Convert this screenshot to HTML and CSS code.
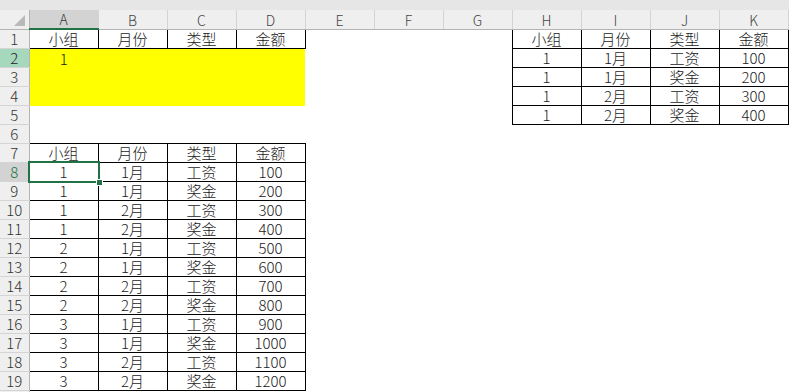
FILE: index.html
```html
<!DOCTYPE html>
<html lang="zh-CN">
<head>
  <meta charset="UTF-8">
  <title>Sheet1</title>
  <link rel="stylesheet" href="styles.css">
</head>
<body>
  <div class="topbar"></div>

  <table class="sheet">
    <colgroup>
      <col class="col-rh">
      <col class="col-c"><col class="col-c"><col class="col-c"><col class="col-c">
      <col class="col-c"><col class="col-c"><col class="col-c">
      <col class="col-c"><col class="col-c"><col class="col-c"><col class="col-c">
    </colgroup>
    <thead>
      <tr class="colhead">
        <th class="corner"><span class="tri"></span></th>
        <th class="sel">A</th><th>B</th><th>C</th><th>D</th>
        <th>E</th><th>F</th><th>G</th>
        <th>H</th><th>I</th><th>J</th><th>K</th>
      </tr>
    </thead>
    <tbody>
      <tr>
        <th class="rh">1</th>
        <td class="b">小组</td><td class="b">月份</td><td class="b">类型</td><td class="b">金额</td>
        <td></td><td></td><td></td>
        <td class="b">小组</td><td class="b">月份</td><td class="b">类型</td><td class="b">金额</td>
      </tr>
      <tr>
        <th class="rh rh-green">2</th>
        <td class="y">1</td><td class="y"></td><td class="y"></td><td class="y"></td>
        <td></td><td></td><td></td>
        <td class="b">1</td><td class="b">1月</td><td class="b">工资</td><td class="b">100</td>
      </tr>
      <tr>
        <th class="rh">3</th>
        <td class="y"></td><td class="y"></td><td class="y"></td><td class="y"></td>
        <td></td><td></td><td></td>
        <td class="b">1</td><td class="b">1月</td><td class="b">奖金</td><td class="b">200</td>
      </tr>
      <tr>
        <th class="rh">4</th>
        <td class="y"></td><td class="y"></td><td class="y"></td><td class="y"></td>
        <td></td><td></td><td></td>
        <td class="b">1</td><td class="b">2月</td><td class="b">工资</td><td class="b">300</td>
      </tr>
      <tr>
        <th class="rh">5</th>
        <td></td><td></td><td></td><td></td>
        <td></td><td></td><td></td>
        <td class="b">1</td><td class="b">2月</td><td class="b">奖金</td><td class="b">400</td>
      </tr>
      <tr>
        <th class="rh">6</th>
        <td></td><td></td><td></td><td></td><td></td><td></td><td></td><td></td><td></td><td></td><td></td>
      </tr>
      <tr>
        <th class="rh">7</th>
        <td class="b">小组</td><td class="b">月份</td><td class="b">类型</td><td class="b">金额</td>
        <td></td><td></td><td></td><td></td><td></td><td></td><td></td>
      </tr>
      <tr>
        <th class="rh rh-active">8</th>
        <td class="b active">1<span class="cursor"></span><span class="handle"></span></td><td class="b">1月</td><td class="b">工资</td><td class="b">100</td>
        <td></td><td></td><td></td><td></td><td></td><td></td><td></td>
      </tr>
      <tr>
        <th class="rh">9</th>
        <td class="b">1</td><td class="b">1月</td><td class="b">奖金</td><td class="b">200</td>
        <td></td><td></td><td></td><td></td><td></td><td></td><td></td>
      </tr>
      <tr>
        <th class="rh">10</th>
        <td class="b">1</td><td class="b">2月</td><td class="b">工资</td><td class="b">300</td>
        <td></td><td></td><td></td><td></td><td></td><td></td><td></td>
      </tr>
      <tr>
        <th class="rh">11</th>
        <td class="b">1</td><td class="b">2月</td><td class="b">奖金</td><td class="b">400</td>
        <td></td><td></td><td></td><td></td><td></td><td></td><td></td>
      </tr>
      <tr>
        <th class="rh">12</th>
        <td class="b">2</td><td class="b">1月</td><td class="b">工资</td><td class="b">500</td>
        <td></td><td></td><td></td><td></td><td></td><td></td><td></td>
      </tr>
      <tr>
        <th class="rh">13</th>
        <td class="b">2</td><td class="b">1月</td><td class="b">奖金</td><td class="b">600</td>
        <td></td><td></td><td></td><td></td><td></td><td></td><td></td>
      </tr>
      <tr>
        <th class="rh">14</th>
        <td class="b">2</td><td class="b">2月</td><td class="b">工资</td><td class="b">700</td>
        <td></td><td></td><td></td><td></td><td></td><td></td><td></td>
      </tr>
      <tr>
        <th class="rh">15</th>
        <td class="b">2</td><td class="b">2月</td><td class="b">奖金</td><td class="b">800</td>
        <td></td><td></td><td></td><td></td><td></td><td></td><td></td>
      </tr>
      <tr>
        <th class="rh">16</th>
        <td class="b">3</td><td class="b">1月</td><td class="b">工资</td><td class="b">900</td>
        <td></td><td></td><td></td><td></td><td></td><td></td><td></td>
      </tr>
      <tr>
        <th class="rh">17</th>
        <td class="b">3</td><td class="b">1月</td><td class="b">奖金</td><td class="b">1000</td>
        <td></td><td></td><td></td><td></td><td></td><td></td><td></td>
      </tr>
      <tr>
        <th class="rh">18</th>
        <td class="b">3</td><td class="b">2月</td><td class="b">工资</td><td class="b">1100</td>
        <td></td><td></td><td></td><td></td><td></td><td></td><td></td>
      </tr>
      <tr>
        <th class="rh">19</th>
        <td class="b">3</td><td class="b">2月</td><td class="b">奖金</td><td class="b">1200</td>
        <td></td><td></td><td></td><td></td><td></td><td></td><td></td>
      </tr>
      <tr>
        <th class="rh"></th>
        <td></td><td></td><td></td><td></td><td></td><td></td><td></td><td></td><td></td><td></td><td></td>
      </tr>
    </tbody>
  </table>
</body>
</html>
```

FILE: styles.css
```css
body {
    margin: 0px;
    background-color: #ffffff;
    font-family: "Noto Sans CJK SC", "Noto Sans", sans-serif;
    overflow: hidden;
}

.topbar {
    height: 10px;
    background-color: #e6e6e6;
}

.sheet {
    border-collapse: collapse;
    table-layout: fixed;
    width: 788px;
}

.col-rh {
    width: 29px;
}

.col-c {
    width: 69px;
}

.sheet tr {
    height: 19px;
}

.sheet th,
.sheet td {
    padding: 0px;
    height: 18px;
    line-height: 18px;
    font-size: 15px;
    font-weight: 300;
    text-align: center;
    vertical-align: bottom;
    white-space: nowrap;
    overflow: visible;
}

.sheet td {
    color: #1a1a1a;
}

/* column letters */
.colhead th {
    background-color: #efefef;
    color: #444444;
    border-right: 1px solid #d4d4d4;
    border-bottom: 1px solid #b4b4b4;
    font-size: 14px;
}

.colhead th.corner {
    border-right: 1px solid #b4b4b4;
    position: relative;
}

.tri {
    position: absolute;
    right: 4px;
    bottom: 3px;
    width: 0px;
    height: 0px;
    border-left: 11px solid transparent;
    border-bottom: 11px solid #b9b9b9;
}

.colhead th.sel {
    background-color: #d3d3d3;
    color: #333333;
    border-bottom: 2px solid #217346;
}

/* row numbers */
.rh {
    background-color: #efefef;
    color: #333333;
    border-right: 1px solid #b4b4b4;
    border-bottom: 1px solid #d4d4d4;
}

.rh-green {
    background-color: #a6d8bd;
    color: #222222;
}

.rh-active {
    background-color: #d3d3d3;
    color: #217346;
}

/* cell formats */
.b {
    border: 1px solid #000000;
}

.y {
    background-color: #ffff00;
}

.active {
    position: relative;
}

.cursor {
    position: absolute;
    left: -2px;
    top: -2px;
    right: -2px;
    bottom: -2px;
    border: 2px solid #217346;
}

.handle {
    position: absolute;
    right: -5px;
    bottom: -5px;
    width: 5px;
    height: 5px;
    background-color: #217346;
    border: 1px solid #ffffff;
}
```
